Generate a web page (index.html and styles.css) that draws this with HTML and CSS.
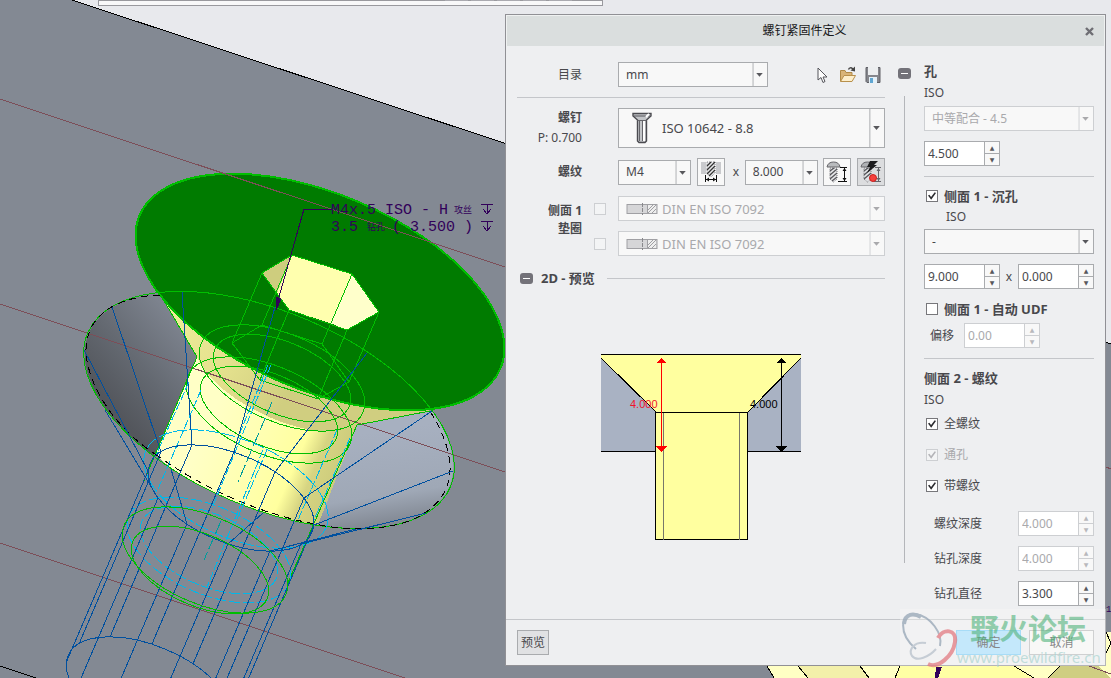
FILE: index.html
```html
<!DOCTYPE html>
<html lang="zh-CN">
<head>
<meta charset="utf-8">
<title>螺钉紧固件定义</title>
<link rel="stylesheet" href="styles.css">
</head>
<body>
<main class="desktop">
<svg class="scene" viewBox="0 0 1111 678" preserveAspectRatio="xMinYMin slice" aria-hidden="true">
  <defs>
    <linearGradient id="gLeft" gradientUnits="userSpaceOnUse" x1="105" y1="400" x2="185" y2="330"><stop offset="0" stop-color="#53565c"/><stop offset=".45" stop-color="#646971"/><stop offset="1" stop-color="#7d838e"/></linearGradient>
    <linearGradient id="gRight" gradientUnits="userSpaceOnUse" x1="385" y1="430" x2="400" y2="528"><stop offset="0" stop-color="#a7b0c0"/><stop offset=".65" stop-color="#9fa8b6"/><stop offset="1" stop-color="#7c828c"/></linearGradient>
    <linearGradient id="gCyl" gradientUnits="userSpaceOnUse" x1="205" y1="430" x2="335" y2="486"><stop offset="0" stop-color="#ffffc6"/><stop offset=".4" stop-color="#ffffb0"/><stop offset=".68" stop-color="#ffff9e"/><stop offset=".82" stop-color="#d6d482"/><stop offset="1" stop-color="#cccb7c"/></linearGradient>
    <linearGradient id="gCone" gradientUnits="userSpaceOnUse" x1="170" y1="320" x2="320" y2="410"><stop offset="0" stop-color="#efec98"/><stop offset=".45" stop-color="#e2df8c"/><stop offset=".8" stop-color="#d0ce80"/></linearGradient>
    <clipPath id="cWasher"><ellipse cx="269" cy="410" rx="196" ry="98" transform="rotate(23 269 410)"/></clipPath>
  </defs>
  <rect width="1111" height="678" fill="#e8e9ed"/>
  <path d="M0 0H72L1111 344V678H0Z" fill="#838993"/>
  <path d="M72 0L1111 344M0 666L36 678" class="edge"/>
  <path d="M98 0V5H602V0Z" fill="#f8f8f9" stroke="#99999e"/>
  <path d="M445 0H468M471 0H494M497 0H520M523 0H546M549 0H572" stroke="#aaaab0" stroke-width="2"/>

  <g clip-path="url(#cWasher)">
    <path d="M160 280L197 357L155 454L120 470L60 400V280Z" fill="url(#gLeft)"/>
    <path d="M357 425L430 411L470 420V540H300L316 524Z" fill="url(#gRight)"/>
    <path d="M190 340L197 357L155 454L250 540L316 530L357 425L350 390Z" fill="url(#gCyl)"/>
  </g>
  <path d="M160 294L197 357C206 382 252 418 310 430C330 433 346 430 357 425L430 411L350 330Z" fill="url(#gCone)"/>
  <ellipse cx="320" cy="292" rx="196" ry="98" transform="rotate(23 320 292)" fill="#007b00" stroke="#00be00" stroke-width="2"/>

  <g stroke="#7c4e58" fill="none"><path d="M0 99L505 267M0 304L505 472M0 543L405 678M1106 467L1111 469"/></g>

  <path d="M262 273L292 255L277 293Z" fill="#cecd7e"/>
  <path d="M292 255L352 274L330 323L289 310L277 293Z" fill="#ffffae"/>
  <path d="M352 274L379 312L347 330L330 323Z" fill="#ffffcb"/>
  <g class="green">
    <path d="M262 273L292 255L352 274L379 312L347 330L289 310Z"/>
    <path d="M232 343L262 325L322 344L349 382L318 399L260 380Z"/>
    <path d="M262 273L232 343M292 255L262 325M352 274L322 344M379 312L349 382M347 330L318 399M289 310L260 380"/>
    <ellipse cx="269" cy="410" rx="197" ry="98" transform="rotate(23 269 410)"/>
    <ellipse cx="282" cy="378" rx="88" ry="44" transform="rotate(23 282 378)"/>
    <ellipse cx="282" cy="378" rx="73" ry="36" transform="rotate(23 282 378)"/>
    <ellipse cx="269" cy="410" rx="88" ry="44" transform="rotate(23 269 410)"/>
    <ellipse cx="269" cy="410" rx="73" ry="36" transform="rotate(23 269 410)"/>
    <path d="M160 294L197 357M197 357L124 527M357 425L287 585M357 425L430 411"/>
  </g>
  <path d="M155 454C202 488 260 514 315 524C350 532 400 531 426 512C452 494 462 463 430 411M160 295C110 297 85 320 86 352C88 386 115 428 155 454" fill="none" stroke="#000" stroke-dasharray="7 5"/>
  <g class="cyan">
    <ellipse cx="236" cy="489" rx="98" ry="49" transform="rotate(23 236 489)" stroke-dasharray="14 2"/>
    <ellipse cx="209" cy="550" rx="87" ry="44" transform="rotate(23 209 550)" stroke-dasharray="11 3"/>
    <ellipse cx="209" cy="550" rx="73" ry="36" transform="rotate(23 209 550)" stroke-dasharray="11 3"/>
    <path d="M189 382L156 455M201 390L158 489M350 438L314 520M337 430L298 520M271 365L212 508M268 365L237 440M263 450L207 587M267 450L235 524" stroke-dasharray="9 2"/>
  </g>
  <path d="M272 402L238 482M221 521L204 560" stroke="#009c9c" fill="none" stroke-dasharray="14 3"/>
  <g class="blue">
    <ellipse cx="231" cy="498" rx="88" ry="44" transform="rotate(23 231 498)"/>
    <ellipse cx="149" cy="690" rx="88" ry="44" transform="rotate(23 149 690)"/>
    <path d="M182 292L192 445L110 637M112 307L161 452L79 644M84 350L148 471L66 663M105 410L158 498L76 690M275 307L234 452L152 644M367 353L275 472L193 664M432 411L304 498L222 690M453 471L314 525L232 717M426 513L301 544L219 736M356 529L270 551L188 743M263 513L228 544L146 736M171 469L187 524L105 716"/>
  </g>
  <g class="green">
    <ellipse cx="205" cy="560" rx="88" ry="44" transform="rotate(23 205 560)"/>
    <ellipse cx="200" cy="570" rx="73" ry="36" transform="rotate(23 200 570)"/>
  </g>
  <g class="note">
    <path d="M332 209H304L277 304"/>
    <path d="M276 310L277 297L281 299Z" fill="#32005a"/>
    <path d="M481 204H493M487 204V214M483 209L487 214L491 209M481 221H493M487 221V231M483 226L487 231L491 226"/>
    <text x="331" y="214">M4x.5 ISO - H</text><text x="454" y="213" class="note-cjk">攻丝</text>
    <text x="331" y="231">3.5</text><text x="367" y="230" class="note-cjk">钻孔</text><text x="392" y="231">( 3.500 )</text>
  </g>

  <path d="M767 666L774 678H1111V632H1106V666Z" fill="#ffffc4"/>
  <path d="M798 666L808 678H869L860 666Z" fill="#f3f0aa"/>
  <path d="M900 666L895 678H1034L1014 666Z" fill="#ffffa4"/>
  <path d="M1060 666L1048 678H1111L1098 666Z" fill="#cfce82"/>
  <path d="M767 666L774 678M798 666L808 678M860 666L869 678M900 666L895 678M1014 666L1034 678M1060 666L1048 678M1106 632L1111 643M1106 653L1111 643" class="edge"/>
  <path d="M1089 666L1111 674" stroke="#7c4e58"/>
  <path d="M936 667H942L938 678H935Z" fill="#32005a"/>
  <text x="1106" y="612" class="edge-note">1</text>
</svg>

<section class="dialog" role="dialog" aria-labelledby="dlg-title">
  <header class="titlebar">
    <h1 id="dlg-title">螺钉紧固件定义</h1>
    <button class="close" aria-label="关闭"><svg width="9" height="9" viewBox="0 0 9 9"><path d="M1 1L8 8M8 1L1 8" stroke="#6e6e74" stroke-width="2.4"/></svg></button>
  </header>

  <div class="body">
    <div class="left">
      <div class="row">
        <label class="cap" for="catalog">目录</label>
        <div class="line spread">
          <div class="combo w150"><select id="catalog"><option>mm</option></select><svg class="arr" viewBox="0 0 15 25"><path d="M.5 0V25"/><path d="M4 11H11L7.500 15Z"/></svg></div>
          <div class="tools">
            <button class="tool" aria-label="选择"><svg width="16" height="18" viewBox="0 0 16 18"><path d="M3 2V14L6 11.500L8 16.500L10 15.500L8 11H12Z" fill="#fdfdfd" stroke="#55555b"/></svg></button>
            <button class="tool" aria-label="打开"><svg width="18" height="18" viewBox="0 0 18 18"><path d="M1.500 15V4.500H6L7 6.500H13V15Z" fill="#d9b478" stroke="#b08a48"/><path d="M1.500 15.500L5 9.500H16.500L13 15.500Z" fill="#fdeecb" stroke="#b8904c"/><path d="M9.500 3.500Q11 .5 14 3" fill="none" stroke="#444" stroke-width="1.500"/><path d="M16 .5V5.500L11.500 4.500Z" fill="#444"/></svg></button>
            <button class="tool" aria-label="保存"><svg width="16" height="18" viewBox="0 0 16 18"><path d="M1 1.500H15V16.500H2L1 15.500Z" fill="#85868c" stroke="#606167"/><path d="M3 1H13V9H3Z" fill="#eceef0"/><path d="M4 11H12V17H4Z" fill="#e4f0f8"/><path d="M5 12H8V17H5Z" fill="#5fa6d2"/></svg></button>
          </div>
        </div>
      </div>
      <hr>
      <div class="row">
        <div class="cap two"><label for="screw"><b>螺钉</b></label><span>P: 0.700</span></div>
        <div class="combo tall"><select id="screw"><option>ISO 10642 - 8.8</option></select>
          <svg class="ico" width="20" height="32" viewBox="0 0 20 32"><path d="M1 1.500H19V4L14.500 8V29L13 30.500H7L5.500 29V8L1 4Z" fill="#c3c5c8" stroke="#4b4b50" stroke-width="1.400"/><path d="M2 4H18" stroke="#55555a"/><path d="M12 9V29" stroke="#fff" stroke-width="2"/><path d="M7.500 9V29M10.500 9V29M5.500 8.500H14.500" stroke="#66666b"/><path d="M14 5L17 2" stroke="#fff" stroke-width="2"/></svg>
          <svg class="arr" viewBox="0 0 15 40"><path d="M.5 0V40"/><path d="M4 18H11L7.500 22Z"/></svg></div>
      </div>
      <div class="row">
        <label class="cap" for="thread"><b>螺纹</b></label>
        <div class="line spread">
          <div class="combo w73"><select id="thread"><option>M4</option></select><svg class="arr" viewBox="0 0 15 25"><path d="M.5 0V25"/><path d="M4 11H11L7.500 15Z"/></svg></div>
          <button class="sq" aria-label="测量直径"><svg width="24" height="24" viewBox="0 0 24 24"><path d="M2 2H7V14H2ZM17 2H22V14H17Z" fill="#c9cacd"/><path d="M8 2H16V13L12 17L8 13Z" fill="#e9eaeb" stroke="#88888d" stroke-dasharray="1 1"/><path d="M8 6L12 2M8 10L16 2M8 14L16 6M10 16L16 10" stroke="#333" stroke-width="1.300"/><path d="M6.500 15V22M17.500 15V22M7 19.500H17" stroke="#111"/><path d="M7 19.500L10 17.500V21.500ZM17 19.500L14 17.500V21.500Z" fill="#111"/></svg></button>
          <label class="times" for="len">x</label>
          <div class="combo w73"><select id="len"><option>8.000</option></select><svg class="arr" viewBox="0 0 15 25"><path d="M.5 0V25"/><path d="M4 11H11L7.500 15Z"/></svg></div>
          <button class="sq" aria-label="测量长度"><svg width="24" height="24" viewBox="0 0 24 24"><path d="M2 7Q3 2 8.500 2T15 7Z" fill="#b9bbbe" stroke="#66666b"/><path d="M5 8H12V19L8.500 22L5 19Z" fill="#e4e5e7" stroke="#77777c" stroke-dasharray="1 1"/><path d="M5 11L9 8M5 15L12 9M5 19L12 13M7 21L12 17" stroke="#55555a" stroke-width="1.200"/><path d="M15 7.500H22M13 21.500H22M19.500 8V21" stroke="#111"/><path d="M19.500 8L17.500 11H21.500ZM19.500 21L17.500 18H21.500Z" fill="#111"/></svg></button>
          <button class="sq on" aria-label="自动长度" aria-pressed="true"><svg width="24" height="24" viewBox="0 0 24 24"><path d="M2 7Q3 2 8.500 2T15 7Z" fill="#b0b2b5" stroke="#66666b"/><path d="M5 8H12V19L8.500 22L5 19Z" fill="#e0e1e3" stroke="#77777c" stroke-dasharray="1 1"/><path d="M5 11L9 8M5 15L12 9M5 19L12 13" stroke="#55555a" stroke-width="1.200"/><path d="M16 7.500H22M15 21.500H22M19.500 8V21" stroke="#66666b"/><path d="M19.500 8L17.500 11H21.500ZM19.500 21L17.500 18H21.500Z" fill="#66666b"/><path d="M11 1H19L15 5H18L8 13L11 7H8Z" fill="#1c1c1e"/><circle cx="14" cy="18" r="3.500" fill="#f6403c" stroke="#c82020"/></svg></button>
        </div>
      </div>
      <div class="washers">
        <span class="cap"><b>侧面 1<br>垫圈</b></span>
        <input type="checkbox" disabled aria-label="垫圈 1">
        <div class="combo off"><select disabled aria-label="垫圈 1 类型"><option>DIN EN ISO 7092</option></select>
          <svg class="ico" width="32" height="12" viewBox="0 0 32 12"><rect x="1" y="1.500" width="30" height="9" fill="#d6d6d8" stroke="#a0a0a4"/><path d="M21 2H30V10H21Z" fill="#eee"/><path d="M16.500 0V12" stroke="#88888c" stroke-dasharray="4 1"/><path d="M21.500 2V10M22 7L27 2M22 10L30 2M26 10L30 6" stroke="#a0a0a4"/></svg>
          <svg class="arr" viewBox="0 0 15 25"><path d="M.5 0V25"/><path d="M4 11H11L7.500 15Z"/></svg></div>
        <input type="checkbox" disabled aria-label="垫圈 2">
        <div class="combo off"><select disabled aria-label="垫圈 2 类型"><option>DIN EN ISO 7092</option></select>
          <svg class="ico" width="32" height="12" viewBox="0 0 32 12"><rect x="1" y="1.500" width="30" height="9" fill="#d6d6d8" stroke="#a0a0a4"/><path d="M21 2H30V10H21Z" fill="#eee"/><path d="M16.500 0V12" stroke="#88888c" stroke-dasharray="4 1"/><path d="M21.500 2V10M22 7L27 2M22 10L30 2M26 10L30 6" stroke="#a0a0a4"/></svg>
          <svg class="arr" viewBox="0 0 15 25"><path d="M.5 0V25"/><path d="M4 11H11L7.500 15Z"/></svg></div>
      </div>
      <div class="section-head">
        <button class="fold" aria-label="折叠预览"></button>
        <h2>2D - 预览</h2>
        <hr>
      </div>
      <svg class="preview" width="200" height="187" viewBox="0 0 200 187" role="img" aria-label="2D - 预览">
        <g shape-rendering="crispEdges">
          <path d="M0 0H200V98H0Z" fill="#a9b2c3"/>
          <path d="M0 0H200V4L147 58H55L0 4Z" fill="#ffff9f"/>
          <path d="M0 .5H200M0 97.500H55M147 97.500H200" stroke="#000"/>
          <path d="M0 4L55 58M200 4L147 58" stroke="#000"/>
          <path d="M54.500 58.500H146.500V185.500H54.500Z" fill="#ffff9f" stroke="#000"/>
          <path d="M62.500 59V186M138.500 59V186" stroke="#77776a"/>
          <path d="M60.500 5V97" stroke="#f00"/>
          <path d="M56 9L60.500 4L65 9ZM55 92H66L60.500 98Z" fill="#f00"/>
          <path d="M180.500 5V97" stroke="#000"/>
          <path d="M176 9L180.500 4L185 9ZM175 92H186L180.500 98Z" fill="#000"/>
        </g>
        <text x="29" y="54" fill="#f0142c">4.000</text>
        <text x="149" y="54" fill="#000">4.000</text>
      </svg>
    </div>

    <div class="rail"><button class="fold" aria-label="折叠"></button><span class="bar"></span></div>

    <div class="right">
      <h2>孔</h2>
      <label class="std" for="fit">ISO</label>
      <div class="combo off"><select id="fit" disabled><option>中等配合 - 4.5</option></select><svg class="arr" viewBox="0 0 15 25"><path d="M.5 0V25"/><path d="M4 11H11L7.500 15Z"/></svg></div>
      <div class="spin g10"><input type="text" value="4.500" aria-label="孔径"><button aria-label="增加">▲</button><button aria-label="减少">▼</button></div>
      <hr class="g10">
      <label class="chk g8"><input type="checkbox" checked><b>侧面 1 - 沉孔</b></label>
      <label class="std indent" for="sink">ISO</label>
      <div class="combo"><select id="sink"><option>-</option></select><svg class="arr" viewBox="0 0 15 25"><path d="M.5 0V25"/><path d="M4 11H11L7.500 15Z"/></svg></div>
      <div class="line spread g10">
        <div class="spin"><input type="text" value="9.000" aria-label="沉孔直径"><button aria-label="增加">▲</button><button aria-label="减少">▼</button></div>
        <span>x</span>
        <div class="spin"><input type="text" value="0.000" aria-label="沉孔深度"><button aria-label="增加">▲</button><button aria-label="减少">▼</button></div>
      </div>
      <label class="chk g9"><input type="checkbox"><b>侧面 1 - 自动 UDF</b></label>
      <div class="line offset"><label for="offs">偏移</label>
        <div class="spin off"><input type="text" id="offs" value="0.00" disabled><button disabled aria-label="增加">▲</button><button disabled aria-label="减少">▼</button></div></div>
      <hr class="g10">
      <h2 class="g8">侧面 2 - 螺纹</h2>
      <span class="std">ISO</span>
      <label class="chk"><input type="checkbox" checked>全螺纹</label>
      <label class="chk off g9"><input type="checkbox" checked disabled>通孔</label>
      <label class="chk g9"><input type="checkbox" checked>带螺纹</label>
      <div class="depths">
        <div class="line spread"><label for="d1">螺纹深度</label><div class="spin off"><input type="text" id="d1" value="4.000" disabled><button disabled aria-label="增加">▲</button><button disabled aria-label="减少">▼</button></div></div>
        <div class="line spread"><label for="d2">钻孔深度</label><div class="spin off"><input type="text" id="d2" value="4.000" disabled><button disabled aria-label="增加">▲</button><button disabled aria-label="减少">▼</button></div></div>
        <div class="line spread"><label for="d3">钻孔直径</label><div class="spin"><input type="text" id="d3" value="3.300"><button aria-label="增加">▲</button><button aria-label="减少">▼</button></div></div>
      </div>
    </div>
  </div>

  <footer class="footer">
    <button class="btn preview-btn">预览</button>
    <button class="btn ok">确定</button>
    <button class="btn">取消</button>
  </footer>

  <svg class="mark" width="206" height="57" viewBox="0 0 206 57" aria-hidden="true">
    <rect width="206" height="57" fill="#f8f9f5" opacity=".35"/>
    <g fill="none" opacity=".75">
      <path d="M16 40C-2 25 0 4 15 5C31 7 43 25 40 37" stroke="#95a5b5" stroke-width="2"/>
      <path d="M4 15C5 4 14 4 21 8" stroke="#95a5b5" stroke-width="4"/>
      <path d="M26 34C14 32 8 41 12 47C17 53 29 48 36 40" stroke="#b8c1cb" stroke-width="2"/>
      <path d="M38 29C43 19 57 20 55 33C53 47 38 60 28 55" stroke="#e27b82" stroke-width="4"/>
    </g>
    <text x="70" y="31" class="mark-name">野火论坛</text>
    <text x="57" y="54" class="mark-url">www.proewildfire.cn</text>
  </svg>
</section>
</main>
</body>
</html>
```
FILE: styles.css
```css
* { box-sizing: border-box; }

body {
  margin: 0;
  font: 12px/18px "Noto Sans", "Noto Sans CJK SC", sans-serif;
  color: #48484c;
}

button, input, select { font: inherit; color: inherit; margin: 0; }
h1, h2 { margin: 0; font-size: 12px; font-weight: bold; }
hr { width: 100%; height: 1px; margin: 0; border: 0; background: #c4c6ca; }

.desktop { position: relative; min-height: 100vh; overflow: hidden; background: #838993; }

/* CAD viewport */
.scene { position: absolute; top: 0; left: 0; width: 100%; height: 100%; shape-rendering: crispEdges; }
.edge { stroke: #000; fill: none; }
.green { stroke: #00be00; fill: none; }
.cyan { stroke: #00b8ea; fill: none; }
.blue { stroke: #00509f; fill: none; }
.note { stroke: #32005a; fill: none; }
.note text { stroke: none; fill: #32005a; font: 15px "Liberation Mono", monospace; white-space: pre; }
.note .note-cjk { font: 9px "Noto Sans CJK SC", sans-serif; }
.edge-note { fill: #32005a; font: 9px "Liberation Mono", monospace; }

/* Dialog window */
.dialog {
  position: absolute;
  top: 14px;
  left: 505px;
  right: 5px;
  border: 1px solid #909095;
  background: #eeeff1;
}
.titlebar {
  display: flex;
  align-items: center;
  height: 31px;
  padding: 0 10px;
  border: 1px solid #eff1f1;
  border-bottom: 0;
  background: #dadede;
}
.titlebar h1 { flex: 1; padding-left: 7px; text-align: center; font-weight: normal; color: #18181a; }
.close { display: flex; padding: 0; border: 0; background: none; }

.body { display: flex; gap: 13px; padding: 0 11px; }
.left { flex: 1; display: flex; flex-direction: column; gap: 10px; padding-top: 16px; }
.row { display: grid; grid-template-columns: 65px 1fr; column-gap: 36px; align-items: center; }
.cap { text-align: right; }
.two { display: flex; flex-direction: column; line-height: 20px; }
.line { display: flex; align-items: center; }
.spread { justify-content: space-between; }
.times { width: 9px; text-align: right; }
.tools { display: flex; gap: 8px; padding-right: 4px; }
.tool { display: flex; padding: 0; border: 0; background: none; }

.combo { display: grid; height: 25px; border: 1px solid #a9abae; background: #f8f8f8; }
.combo > * { grid-area: 1 / 1; align-self: center; }
.combo select {
  appearance: none;
  width: 100%;
  height: 100%;
  padding: 0 16px 0 7px;
  border: 0;
  outline: 0;
  background: none;
  opacity: 1;
}
.combo .ico { margin-left: 7px; pointer-events: none; }
.combo .ico ~ .arr { justify-self: end; }
.combo:has(.ico) select { padding-left: 43px; font-size: 13px; line-height: 18px; }
.arr { justify-self: end; width: 15px; height: 100%; pointer-events: none; }
.arr path:first-child { stroke: #a9abae; }
.arr path:last-child { fill: #58585c; }
.tall { height: 40px; }
.tall .ico { margin-left: 13px; }
.w150 { width: 150px; }
.w73 { width: 73px; }
.combo.off { border-color: #cdcfd2; color: #a9a9ac; }
.off .arr path:first-child { stroke: #cdcfd2; }
.off .arr path:last-child { fill: #a9a9ac; }

.sq {
  display: flex;
  align-items: center;
  justify-content: center;
  width: 28px;
  height: 28px;
  padding: 0;
  border: 1px solid #a9abae;
  background: #f8f8f8;
}
.sq.on { background: #dcdddf; }

.washers {
  display: grid;
  grid-template-columns: 65px 12px 1fr;
  gap: 10px 12px;
  align-items: center;
}
.washers .cap { grid-row: span 2; align-self: start; padding-top: 6px; }

input[type="checkbox"] {
  appearance: none;
  display: grid;
  place-items: center;
  width: 12px;
  height: 12px;
  border: 1px solid #77777b;
  background: #fff;
}
input[type="checkbox"]:disabled { border-color: #cdcfd2; background: #f3f4f5; }
input[type="checkbox"]:checked::before {
  content: "";
  width: 8px;
  height: 8px;
  background: #2c2c30;
  clip-path: polygon(0 45%, 18% 34%, 38% 62%, 84% 4%, 100% 14%, 40% 96%);
}
input[type="checkbox"]:checked:disabled::before { background: #b4b4b8; }

.section-head { display: flex; align-items: center; height: 24px; padding-left: 3px; }
.section-head h2 { margin: 0 12px 0 8px; white-space: nowrap; }
.section-head hr { flex: 1; }
.fold {
  display: grid;
  place-items: center;
  flex: none;
  width: 13px;
  height: 11px;
  padding: 0;
  border: 0;
  border-radius: 3px;
  background: #737279;
}
.fold::before { content: ""; width: 7px; height: 1px; background: #fff; }
.preview { margin: 54px 0 0 84px; }
.preview text { font: 11px "Liberation Sans", sans-serif; }

.rail { display: flex; flex-direction: column; align-items: center; gap: 17px; width: 13px; padding: 22px 0 56px; }
.bar { flex: 1; width: 1px; background: #b4b6ba; }

.right { display: flex; flex-direction: column; width: 170px; padding: 14px 0 13px; }
.right h2, .chk { line-height: 22px; }
.section-head h2, .right h2, .chk b { font-size: 13px; }
.std { padding-bottom: 2px; line-height: 22px; }
.indent { padding-left: 22px; line-height: 20px; }
.chk { display: flex; align-items: center; gap: 6px; height: 22px; padding-left: 2px; }
.chk.off { color: #a9a9ac; }
.g8 { margin-top: 8px; }
.g9 { margin-top: 9px; }
.g10 { margin-top: 10px; }
.offset { gap: 10px; margin-top: 3px; padding-left: 6px; }

.spin {
  display: grid;
  grid-template: 1fr 1fr / 1fr 14px;
  gap: 1px;
  width: 76px;
  height: 25px;
  border: 1px solid #a9abae;
  background: #a9abae;
}
.spin input { grid-row: span 2; width: 100%; min-width: 0; padding: 0 3px; border: 0; outline: 0; background: #fff; }
.spin button { padding: 0; border: 0; background: #f8f8f8; color: #58585c; font: 6px/10px "DejaVu Sans", sans-serif; }
.spin.off { border-color: #cdcfd2; background: #cdcfd2; color: #a9a9ac; }
.spin.off button { color: #b8b8bc; }

.depths { display: grid; gap: 10px; margin-top: 14px; padding-left: 10px; }

.footer { display: flex; gap: 8px; padding: 10px 11px; border-top: 1px solid #c4c6ca; }
.btn { width: 65px; height: 25px; padding: 0; border: 1px solid #b9bbbe; background: #f8f8f8; }
.preview-btn { width: 32px; margin-right: auto; border-color: #a9abae; background: #e0e1e3; }
.ok { border-color: #7cccf8; background: #a8dffd; }

.mark { position: absolute; right: -1px; bottom: -1px; overflow: visible; pointer-events: none; }
.mark-name { fill: #4fb27a; fill-opacity: .6; font: bold 29px "Noto Sans CJK SC", sans-serif; }
.mark-url { fill: #a9d2cf; fill-opacity: .7; font: 15px "Noto Sans", sans-serif; }
```
